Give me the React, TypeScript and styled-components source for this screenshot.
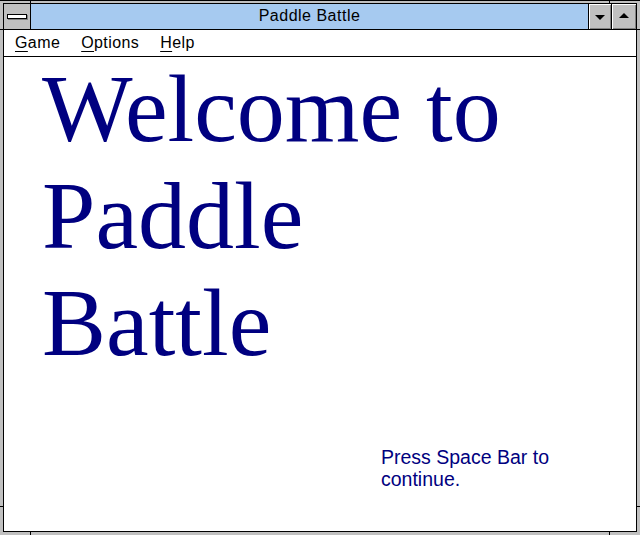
import styled, { createGlobalStyle } from "styled-components";

const GlobalStyle = createGlobalStyle`
  html, body {
    margin: 0;
    padding: 0;
    background: #ffffff;
  }
`;

const StyledWindow = styled.div`
  position: relative;
  box-sizing: border-box;
  width: 640px;
  height: 535px;
  background: #c0c0c0;
  border-top: 1px solid #000000;
  padding: 2px 3px 3px 3px;
  display: flex;
`;

const StyledFrame = styled.div`
  flex: 1;
  display: flex;
  flex-direction: column;
  border: 1px solid #000000;
  background: #ffffff;
  min-height: 0;
`;

const StyledTitleBar = styled.div`
  display: flex;
  height: 25px;
  border-bottom: 1px solid #000000;
  flex-shrink: 0;
`;

const StyledSystemBox = styled.div`
  width: 26px;
  background: #c0c0c0;
  border-right: 1px solid #000000;
  display: flex;
  align-items: center;
  justify-content: center;
`;

const StyledSystemBar = styled.div`
  width: 18px;
  height: 3px;
  background: #ffffff;
  border: 1px solid #000000;
  box-shadow: 1px 1px 0 #808080;
`;

const StyledCaption = styled.div`
  flex: 1;
  background: #a6caf0;
  display: flex;
  align-items: center;
  justify-content: center;
  font-family: "Liberation Sans", Arial, sans-serif;
  font-size: 16px;
  letter-spacing: 0.5px;
  color: #000000;
  padding-bottom: 1px;
`;

const StyledButton = styled.div<{ $last?: boolean }>`
  box-sizing: border-box;
  width: ${(p) => (p.$last ? "25px" : "23px")};
  background: #c0c0c0;
  border-left: 1px solid #000000;
  box-shadow: inset 1px 1px 0 #ffffff, inset -1px -1px 0 #808080;
  display: flex;
  align-items: center;
  justify-content: center;
`;

const StyledArrow = styled.div<{ $up?: boolean }>`
  width: 0;
  height: 0;
  border-left: 5px solid transparent;
  border-right: 5px solid transparent;
  ${(p) => (p.$up ? "border-bottom: 5px solid #000000;" : "border-top: 5px solid #000000;")}
  margin-top: ${(p) => (p.$up ? "-2px" : "2px")};
`;

const StyledMenuBar = styled.div`
  display: flex;
  height: 26px;
  align-items: center;
  border-bottom: 1px solid #000000;
  padding-left: 10px;
  gap: 19px;
  flex-shrink: 0;
  font-family: "Liberation Sans", Arial, sans-serif;
  font-size: 16px;
  letter-spacing: 0.4px;
  color: #000000;
`;

const StyledMenuItem = styled.span`
  padding: 0 1px;
  u {
    text-decoration: underline;
    text-underline-offset: 3px;
  }
`;

const StyledContent = styled.div`
  flex: 1;
  display: flex;
  flex-direction: column;
  padding: 0 0 0 38px;
  color: #000080;
`;

const StyledHeadline = styled.h1`
  margin: -2px 0 0 0;
  font-family: "Liberation Serif", "Times New Roman", serif;
  font-weight: normal;
  font-size: 96px;
  line-height: 107px;
`;

const StyledPrompt = styled.p`
  margin: 70px 0 0 339px;
  width: 200px;
  font-family: "Liberation Sans", Arial, sans-serif;
  font-size: 19.5px;
  line-height: 22px;
`;

const StyledTick = styled.div<{ $vertical?: boolean }>`
  position: absolute;
  background: #000000;
  width: ${(p) => (p.$vertical ? "1px" : "3px")};
  height: ${(p) => (p.$vertical ? "3px" : "1px")};
`;

function App() {
  return (
    <>
      <GlobalStyle />
      <StyledWindow>
        <StyledTick $vertical style={{ left: 30, top: 0 }} />
        <StyledTick $vertical style={{ left: 609, top: 0 }} />
        <StyledTick style={{ left: 0, top: 28 }} />
        <StyledTick style={{ right: 0, top: 28 }} />
        <StyledTick $vertical style={{ left: 30, bottom: 0 }} />
        <StyledTick $vertical style={{ left: 609, bottom: 0 }} />
        <StyledTick style={{ left: 0, bottom: 28 }} />
        <StyledTick style={{ right: 0, bottom: 28 }} />
        <StyledFrame>
          <StyledTitleBar>
            <StyledSystemBox>
              <StyledSystemBar />
            </StyledSystemBox>
            <StyledCaption>Paddle Battle</StyledCaption>
            <StyledButton>
              <StyledArrow />
            </StyledButton>
            <StyledButton $last>
              <StyledArrow $up />
            </StyledButton>
          </StyledTitleBar>
          <StyledMenuBar>
            <StyledMenuItem>
              <u>G</u>ame
            </StyledMenuItem>
            <StyledMenuItem>
              <u>O</u>ptions
            </StyledMenuItem>
            <StyledMenuItem>
              <u>H</u>elp
            </StyledMenuItem>
          </StyledMenuBar>
          <StyledContent>
            <StyledHeadline>
              Welcome to
              <br />
              Paddle
              <br />
              Battle
            </StyledHeadline>
            <StyledPrompt>Press Space Bar to continue.</StyledPrompt>
          </StyledContent>
        </StyledFrame>
      </StyledWindow>
    </>
  );
}

export default App;
